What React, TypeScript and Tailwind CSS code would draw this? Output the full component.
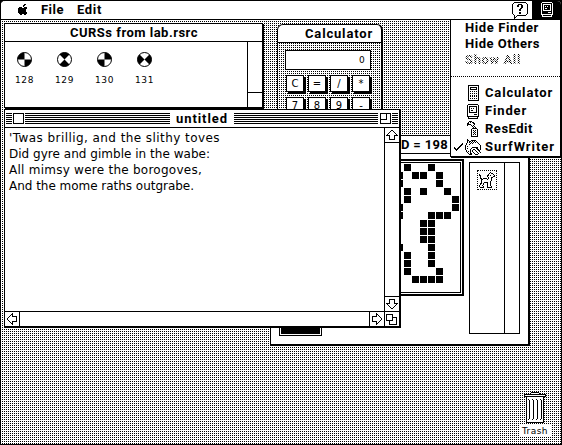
import { useLayoutEffect, useRef, useState } from "react";

// Text fitted to a fixed advance width by adjusting the tracking.
function Label({ children, w, className = "" }: { children: string; w: number; className?: string }) {
  const ref = useRef<HTMLSpanElement>(null);
  const [track, setTrack] = useState(0);
  useLayoutEffect(() => {
    if (ref.current) setTrack((w - ref.current.getBoundingClientRect().width) / children.length);
  }, []);
  return (
    <span ref={ref} className={`block w-fit shrink-0 whitespace-pre ${className}`} style={{ letterSpacing: track }}>
      {children}
    </span>
  );
}

const chicago = "font-[family-name:Roboto,'Liberation_Sans',sans-serif] font-bold text-[13px] leading-4";
const geneva = "font-[family-name:'DejaVu_Sans',sans-serif] text-[9px] leading-3";
const dither = "bg-[conic-gradient(#000_25%,#fff_0)] bg-[length:2px_2px]";
const checker = "bg-[conic-gradient(#000_25%,#fff_0_50%,#000_0_75%,#fff_0)] bg-[length:2px_2px]";

// One-bit icon: '#' is ink, 'o' is paper, anything else is transparent.
function Bitmap({ rows, ink = "#000", paper = "#fff", className = "" }: { rows: string[]; ink?: string; paper?: string; className?: string }) {
  const w = Math.max(...rows.map((r) => r.length));
  return (
    <svg width={w} height={rows.length} viewBox={`0 0 ${w} ${rows.length}`} shapeRendering="crispEdges" className={`block shrink-0 ${className}`}>
      {rows.flatMap((r, y) =>
        [...r].map((c, x) => (c === "#" || c === "o" ? <rect key={`${x}-${y}`} x={x} y={y} width="1" height="1" fill={c === "#" ? ink : paper} /> : null)),
      )}
    </svg>
  );
}

const APPLE = [
  "......##..",
  ".....##...",
  ".....#....",
  ".###..###.",
  "#########.",
  "########..",
  "########..",
  "########..",
  "#########.",
  ".########.",
  "..##..##..",
];
const HELP = [
  "..############..",
  ".#............#.",
  "#.....####.....#",
  "#....##..##....#",
  "#....##..##....#",
  "#........##....#",
  "#.......##.....#",
  "#......##......#",
  "#......##......#",
  "#..............#",
  "#......##......#",
  "#......##......#",
  ".#............#.",
  "..#..#########..",
  "..#.#...........",
  "..##............",
  "..#.............",
];
const MAC = [
  ".##########.",
  "#..........#",
  "#.########.#",
  "#.#......#.#",
  "#.#.#.#..#.#",
  "#.#......#.#",
  "#.#.##...#.#",
  "#.#......#.#",
  "#.########.#",
  "#..........#",
  "#......###.#",
  "#..........#",
  "############",
  ".#........#.",
  ".##########.",
];
const CALC = [
  "###########",
  "#.........#",
  "#.#######.#",
  "#.#.....#.#",
  "#.#######.#",
  "#.........#",
  "#.#.#.#.#.#",
  "#.........#",
  "#.#.#.#.#.#",
  "#.........#",
  "#.#.#.#.#.#",
  "#.#.#.#.#.#",
  "#.........#",
  "#.#.#.#.#.#",
  "#.........#",
  "###########",
];
const RESEDIT = [
  "..###.......",
  ".#.#.##.....",
  "##....##....",
  "####...#....",
  "#...#.#.....",
  ".....#.#....",
  "......#.#...",
  ".....#####..",
  "....#.....#.",
  "....#.#.#.#.",
  "....#..#..#.",
  "....#.#.#.#.",
  "....#..#..#.",
  "....#.#.#.#.",
  "....#.....#.",
  "....#######.",
];
const SURF = [
  "..#.............",
  "..##..#####.....",
  "..#.##.#.#.#....",
  "..#.#.#.#.#.#...",
  ".#...#.#.....#..",
  ".#..#.........#.",
  "#..............#",
  "#.#............#",
  "#......######..#",
  "#.#...#....##..#",
  "#....#..##..##.#",
  ".#...#.#..#..##.",
  ".#.#.#.#...#..#.",
  "..#..#..#...#..#",
  "...#.##..#...#..",
  "....###...###...",
];
const CHECK = [
  "........#",
  ".......##",
  "......##.",
  ".....##..",
  "#...##...",
  "##.##....",
  ".###.....",
  "..#......",
];
const DOG = [
  "...........#....",
  "..........#.##..",
  "#........#....#.",
  "##......##.#...#",
  ".#......#.....##",
  ".#.......#..##..",
  ".##.####.#..#...",
  "..##....#...#...",
  "..#.........#...",
  "..#........#....",
  "..#..####..#....",
  ".##.#...#..#....",
  ".#..#...#..#....",
  "#..#....#..#....",
  "#...#...#...#...",
  ".####...#####...",
];
const TRASH = [
  ".......########.......",
  "......#oooooooo#......",
  "######################",
  "#oooooooooooooooooooo#",
  "######################",
  "..#oooooooooooooooo#..",
  "..#oooooooooooooooo#..",
  "..#o#ooo#ooo#ooo#oo#..",
  "..#oo#ooo#ooo#ooo#o#..",
  ...Array(17).fill("..#oo#ooo#ooo#ooo#o#.."),
  "..#oo#ooo#ooo#ooo#o#..",
  "..#o#ooo#ooo#ooo#oo#..",
  "..#oooooooooooooooo#..",
  "..#oooooooooooooooo#..",
  "..##################..",
];
const UP = [
  ".....##.....",
  "....#..#....",
  "...#....#...",
  "..#......#..",
  ".#........#.",
  "####....####",
  "...#....#...",
  "...#....#...",
  "...#....#...",
  "...######...",
];
const DOWN = [...UP].reverse();
const LEFT = Array.from({ length: 12 }, (_, y) => UP.map((r) => r[y]).join(""));
const RIGHT = LEFT.map((r) => r.split("").reverse().join(""));
const GROW = [
  "#######.....",
  "#.....#.....",
  "#.....#.....",
  "#.....#####.",
  "#.....#...#.",
  "#.....#...#.",
  "#######...#.",
  "...#......#.",
  "...#......#.",
  "...#......#.",
  "...########.",
];

const FATBITS = [
  ".#..#...", "#.##.#..", "#....#..", ".#.#..#.", ".#.....#",
  "#......#", "#...###.", "...##...", "...##...", "...##...",
  "#...#...", ".#..#...", ".#..#...", ".#...#..", "..####..",
];

function Ball({ turn }: { turn: number }) {
  return (
    <svg width="15" height="15" viewBox="-7.5 -7.5 15 15" className="block">
      <circle r="7" fill="#fff" stroke="#000" />
      <g transform={`rotate(${turn})`}>
        <path d="M0 0V-7A7 7 0 0 0 -7 0ZM0 0V7A7 7 0 0 0 7 0Z" />
      </g>
    </svg>
  );
}

function Stripes({ className }: { className: string }) {
  return <div className={`h-[11px] bg-[repeating-linear-gradient(#000_0_1px,#fff_1px_2px)] ${className}`} />;
}

function CursWindow() {
  const items = [["128", 0], ["129", 45], ["130", 90], ["131", 135]] as const;
  return (
    <section className="absolute left-[4px] top-[23px] flex h-[85px] w-[259px] flex-col border border-black bg-white shadow-[1px_1px_0_#000]">
      <header className="flex h-[18px] shrink-0 items-center border-b border-black pl-[65px]">
        <Label w={128} className={chicago}>CURSs from lab.rsrc</Label>
      </header>
      <div className="flex flex-1">
        <div className="flex flex-1 gap-[22px] pl-[10px] pt-[10px]">
          {items.map(([id, turn]) => (
            <div key={id} className="flex w-[19px] flex-col items-center gap-[7px] -mr-px">
              <Ball turn={turn} />
              <Label w={19} className={geneva}>{id}</Label>
            </div>
          ))}
        </div>
        <div className="flex w-[15px] flex-col border-l border-black">
          <div className="h-[51px] border-b border-black" />
        </div>
      </div>
    </section>
  );
}

function Calculator() {
  return (
    <section className="absolute left-[277px] top-[24px] flex h-[100px] w-[106px] flex-col overflow-hidden rounded-t-[6px] border border-r-2 border-black bg-white">
      <header className="flex h-[18px] shrink-0 items-center border-b border-black pl-[27px]">
        <Label w={68} className={chicago}>Calculator</Label>
      </header>
      <div className={`flex-1 pl-[7px] pt-[7px] ${dither}`}>
        <div className="flex h-5 w-[86px] items-center justify-end border border-black bg-white pr-[4px]">
          <Label w={7} className={geneva}>0</Label>
        </div>
        <div className="grid grid-cols-[repeat(4,22px)] gap-y-[5px] pl-px pt-[5px]">
          {["C", "=", "/", "*", "7", "8", "9", "-"].map((k) => (
            <div key={k} className="flex h-[17px] w-[18px] items-center justify-center border border-black bg-white font-[family-name:'DejaVu_Sans',sans-serif] text-[10px] leading-3 shadow-[2px_2px_0_#000]">{k}</div>
          ))}
        </div>
      </div>
    </section>
  );
}

function ResEditWindow() {
  return (
    <section className="absolute left-[270px] top-[135px] flex h-[210px] w-[259px] flex-col border border-black bg-white shadow-[1px_1px_0_#000]">
      <header className="flex h-[18px] shrink-0 items-center border-b border-black pl-[130px]">
        <Label w={47} className={chicago}>D = 198</Label>
      </header>
      <div className="flex flex-1 items-start">
        <div className="mt-[139px] ml-[8px] h-[43px] w-[43px] border border-black p-px"><div className="h-full bg-black" /></div>
        <div className="ml-[9px] mt-[5px] h-[137px] w-[133px] border-2 border-black p-px">
          <div className="flex h-full flex-col items-end gap-px border border-black pr-[1px] pt-px">
            {FATBITS.map((row, y) => (
              <div key={y} className="flex gap-px">
                {[...row].map((c, x) => <i key={x} className={`block size-[7px] ${c === "#" ? "bg-black" : ""}`} />)}
              </div>
            ))}
          </div>
        </div>
        <div className="ml-[5px] mt-[8px] flex h-[172px] w-[51px] border border-black">
          <div className="w-[34px] pl-[7px] pt-[7px]">
            <div className="flex size-5 items-center justify-center border border-dotted border-black"><Bitmap rows={DOG} /></div>
          </div>
          <div className="border-l border-black" />
        </div>
      </div>
    </section>
  );
}

function Editor() {
  const lines: [string, number][] = [
    ["'Twas brillig, and the slithy toves", 211],
    ["Did gyre and gimble in the wabe:", 201],
    ["All mimsy were the borogoves,", 193],
    ["And the mome raths outgrabe.", 185],
  ];
  return (
    <section className="absolute left-[4px] top-[109px] flex h-[218px] w-[396px] flex-col border border-black bg-white shadow-[1px_1px_0_#000]">
      <header className="flex h-[18px] shrink-0 items-center border-b border-black pl-px">
        <Stripes className="w-[6px]" />
        <div className="ml-px size-[11px] border border-black" />
        <Stripes className="ml-px w-[145px]" />
        <Label w={52} className={`ml-[6px] ${chicago}`}>untitled</Label>
        <Stripes className="ml-[6px] w-[144px]" />
        <div className="ml-[2px] size-[11px] border border-black"><div className="size-[6px] border-b border-r border-black" /></div>
        <Stripes className="ml-px w-[6px]" />
      </header>
      <div className="flex flex-1">
        <div className="flex flex-1 flex-col pl-[4px] pt-[2px]">
          {lines.map(([t, w]) => (
            <Label key={t} w={w} className="font-[family-name:'DejaVu_Sans',sans-serif] text-[12px] leading-4">{t}</Label>
          ))}
        </div>
        <div className="flex w-[15px] flex-col justify-between border-l border-black">
          <div className="flex h-[15px] items-center justify-center border-b border-black"><Bitmap rows={UP} /></div>
          <div className="flex h-[15px] items-center justify-center border-t border-black"><Bitmap rows={DOWN} /></div>
        </div>
      </div>
      <footer className="flex h-[15px] shrink-0 border-t border-black">
        <div className="flex w-[15px] items-center justify-center border-r border-black"><Bitmap rows={LEFT} /></div>
        <div className="flex-1" />
        <div className="flex w-[15px] items-center justify-center border-l border-black"><Bitmap rows={RIGHT} /></div>
        <div className="flex w-[15px] items-center justify-center border-l border-black"><Bitmap rows={GROW} /></div>
      </footer>
    </section>
  );
}

function AppMenu() {
  const apps: [string, number, string[]][] = [
    ["Calculator", 68, CALC], ["Finder", 42, MAC], ["ResEdit", 48, RESEDIT], ["SurfWriter", 70, SURF],
  ];
  return (
    <div className="absolute left-[450px] top-[19px] h-[138px] w-[111px] border border-black bg-white shadow-[1px_1px_0_#000]">
      <div className="flex flex-col items-start pl-[14px]">
        <Label w={74} className={chicago}>Hide Finder</Label>
        <Label w={75} className={chicago}>Hide Others</Label>
        <Label w={56} className={`bg-clip-text text-transparent ${checker} ${chicago}`}>Show All</Label>
      </div>
      <div className="mt-[8px] h-px bg-[repeating-linear-gradient(90deg,#000_0_1px,#fff_1px_2px)]" />
      <div className="mt-[7px]">
        {apps.map(([name, w, icon], i) => (
          <div key={name} className="flex h-[18px] items-center">
            <div className="flex w-[14px] justify-end">{i === 3 && <Bitmap rows={CHECK} className="mr-[2px]" />}</div>
            <div className="mr-[4px] flex w-4 justify-center"><Bitmap rows={icon} /></div>
            <Label w={w} className={chicago}>{name}</Label>
          </div>
        ))}
      </div>
    </div>
  );
}

export default function App() {
  return (
    <main className="h-[445px] w-[562px] overflow-hidden bg-black text-black">
      <div className={`relative h-full w-full overflow-hidden rounded-t-[5px] border border-black ${dither}`}>
        <div className="absolute -left-px -top-px h-[445px] w-[562px]">
          <CursWindow />
          <Calculator />
          <ResEditWindow />
          <Editor />
          <div className="absolute left-[519px] top-[392px] flex w-[32px] flex-col items-center">
            <Bitmap rows={TRASH} />
            <div className="mt-[2px] flex h-[11px] w-[31px] items-center justify-center bg-white">
              <Label w={26} className={geneva}>Trash</Label>
            </div>
          </div>
          <AppMenu />
        </div>
        <nav className="flex h-[19px] items-center border-b border-black bg-white">
          <Bitmap rows={APPLE} className="mb-px ml-[17px]" />
          <Label w={23} className={`ml-[13px] ${chicago}`}>File</Label>
          <Label w={25} className={`ml-[13px] ${chicago}`}>Edit</Label>
          <Bitmap rows={HELP} className="ml-auto" />
          <div className="ml-[4px] flex h-[19px] w-[29px] items-start justify-center bg-black pt-px">
            <Bitmap rows={MAC} ink="#fff" />
          </div>
        </nav>
      </div>
    </main>
  );
}
